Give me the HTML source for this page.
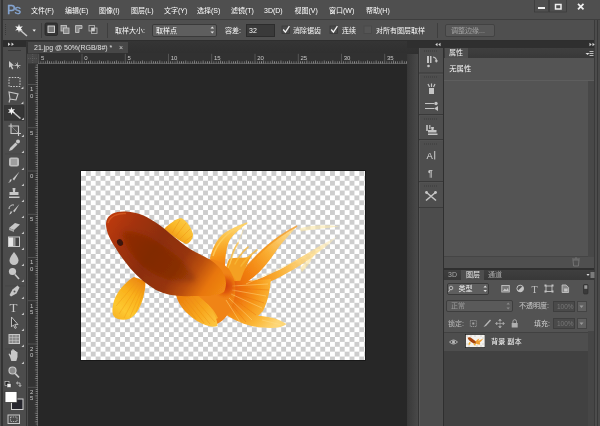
<!DOCTYPE html>
<html lang="zh-CN">
<head>
<meta charset="utf-8">
<title>Photoshop</title>
<style>
*{box-sizing:border-box;margin:0;padding:0}
html,body{width:600px;height:426px;overflow:hidden;background:#4d4d4d}
body{position:relative;font-family:"Liberation Sans","Noto Sans CJK SC",sans-serif;font-size:7px;color:#ececec;line-height:10px}
#wrap{position:absolute;left:0;top:0;width:600px;height:426px;overflow:hidden;filter:blur(0.55px)}
.a{position:absolute}
.t{position:absolute;white-space:nowrap;height:10px}
#menubar{left:0;top:0;width:600px;height:20px;background:#4f4f4f}
#optbar{left:0;top:19px;width:600px;height:22px;background:#4f4f4f;border-top:1px solid #3e3e3e;border-bottom:1px solid #2e2e2e}
#tools{left:0;top:41px;width:27.5px;height:385px;background:#4c4c4c}
#toolhead{left:3px;top:40.8px;width:23.7px;height:6.7px;background:#2d2d2d}
#tabbar{left:27px;top:40.5px;width:391.5px;height:13px;background:linear-gradient(#353535,#2f2f2f)}
#tab{left:27.5px;top:41.5px;width:100px;height:12px;background:#474747}
#rulerh{left:27.5px;top:53.3px;width:379.7px;height:10.3px;background:#313131}
#rulerv{left:27.5px;top:63px;width:10.5px;height:363px;background:#333}
#canvas{left:38px;top:63.6px;width:369.2px;height:363px;background:#272727}
#doc{left:80.6px;top:170.7px;width:284.5px;height:189.4px;background:conic-gradient(#cdcdcd 25%,#fff 0 50%,#cdcdcd 0 75%,#fff 0) 0 0/9.78px 9.78px;box-shadow:0 0 0 0.8px #151515}
#dock{left:407px;top:41px;width:193px;height:385px;background:linear-gradient(90deg,#383838 0,#484848 10.5px,#333 10.6px,#333 12px,#444 12.1px)}
#dockhead{left:407px;top:40.5px;width:193px;height:7px;background:#2f2f2f}
#iconcol{left:419px;top:47.5px;width:23.6px;height:378.5px;background:#4e4e4e;border-left:1px solid #585858}
#gap1{left:442.6px;top:47.5px;width:1.5px;height:378.5px;background:#2f2f2f}
#prop{left:444px;top:48px;width:151px;height:220px;background:#545454}
#proptabs{left:444px;top:47.5px;width:151px;height:10.5px;background:linear-gradient(#3f3f3f,#383838)}
#proptab{left:444.5px;top:47.5px;width:23.5px;height:10.5px;background:#4e4e4e}
#propfoot{left:444px;top:256px;width:151px;height:12px;background:#4f4f4f;border-top:1px solid #454545}
#gap2{left:444px;top:268px;width:151px;height:2px;background:#2f2f2f}
#lay{left:444px;top:270px;width:151px;height:156px;background:#535353}
#laytabs{left:444px;top:270px;width:151px;height:10px;background:linear-gradient(#3f3f3f,#383838)}
#laytab{left:461px;top:270px;width:23px;height:10px;background:#4e4e4e}
#laylist{left:444px;top:331.5px;width:151px;height:95px;background:#414141}
#layrow{left:444px;top:332.5px;width:143.5px;height:18.5px;background:#4e4e4e}
#scr1{left:587.5px;top:81px;width:7px;height:176px;background:#484848}
#scr2{left:587.8px;top:331px;width:6.5px;height:95px;background:#464646}
#propline{left:444px;top:80px;width:151px;height:1px;background:#5e5e5e}

.m{top:6px;font-size:7px;color:#fff}
.o{top:25.5px;color:#fafafa}
#tedge{left:25.7px;top:41px;width:1.8px;height:385px;background:#343434}
#ledge{left:0;top:0;width:3px;height:426px;background:linear-gradient(90deg,#4c4c4c 0,#4c4c4c 1.3px,#333 1.4px)}
#redge{left:594.3px;top:19.5px;width:5.7px;height:406.5px;background:linear-gradient(90deg,#3a3a3a 0,#3a3a3a 1.2px,#4c4c4c 1.3px,#4c4c4c 2.8px,#383838 2.9px,#383838 3.9px,#4a4a4a 4px)}
</style>
</head>
<body>
<div id="wrap">
<div class="a" id="menubar"></div>
<div class="a" id="optbar"></div>
<div class="a" id="tools"></div>
<div class="a" id="toolhead"></div>
<div class="a" id="dock"></div>
<div class="a" id="tabbar"></div>
<div class="a" id="tab"></div>
<div class="a" id="rulerh"></div>
<div class="a" id="rulerv"></div>
<div class="a" id="canvas"></div>
<div class="a" id="doc"></div>
<div class="a" id="dockhead"></div>
<div class="a" id="iconcol"></div>
<div class="a" id="gap1"></div>
<div class="a" id="prop"></div>
<div class="a" id="proptabs"></div>
<div class="a" id="proptab"></div>
<div class="a" id="propfoot"></div>
<div class="a" id="gap2"></div>
<div class="a" id="lay"></div>
<div class="a" id="laytabs"></div>
<div class="a" id="laytab"></div>
<div class="a" id="laylist"></div>
<div class="a" id="layrow"></div>
<div class="a" id="scr1"></div>
<div class="a" id="scr2"></div>
<div class="a" id="propline"></div>
<div class="a" id="redge"></div>
<div class="a" id="ledge"></div>
<div class="a" id="tedge"></div>
<svg class="a" style="left:27px;top:53px" width="383" height="373" viewBox="27 53 383 373">
<rect x="27.500" y="53.500" width="10.300" height="10" fill="#474747"/><path d="M28 58.500 h9.500 M32.700 54 v9" stroke="#6a6a6a" stroke-width=".6" stroke-dasharray="1 1"/>
<defs><pattern id="ph" x="81.650" y="0" width="2.1625" height="4" patternUnits="userSpaceOnUse"><rect width="0.7" height="4" fill="#a0a0a0"/></pattern><pattern id="pv" x="0" y="170.650" width="4" height="2.1625" patternUnits="userSpaceOnUse"><rect width="4" height="0.7" fill="#a0a0a0"/></pattern></defs>
<rect x="38.500" y="61.300" width="368.500" height="2.300" fill="url(#ph)" opacity=".85"/>
<rect x="35.700" y="64" width="2.300" height="362" fill="url(#pv)" opacity=".85"/>
<rect x="38.35" y="53.800" width="0.8" height="9.500" fill="#5e5e5e"/>
<rect x="47.00" y="60.300" width="0.8" height="3" fill="#7c7c7c" opacity=".8"/>
<rect x="55.65" y="60.300" width="0.8" height="3" fill="#7c7c7c" opacity=".8"/>
<rect x="64.30" y="60.300" width="0.8" height="3" fill="#7c7c7c" opacity=".8"/>
<rect x="72.95" y="60.300" width="0.8" height="3" fill="#7c7c7c" opacity=".8"/>
<rect x="81.60" y="53.800" width="0.8" height="9.500" fill="#5e5e5e"/>
<rect x="90.25" y="60.300" width="0.8" height="3" fill="#7c7c7c" opacity=".8"/>
<rect x="98.90" y="60.300" width="0.8" height="3" fill="#7c7c7c" opacity=".8"/>
<rect x="107.55" y="60.300" width="0.8" height="3" fill="#7c7c7c" opacity=".8"/>
<rect x="116.20" y="60.300" width="0.8" height="3" fill="#7c7c7c" opacity=".8"/>
<rect x="124.85" y="53.800" width="0.8" height="9.500" fill="#5e5e5e"/>
<rect x="133.50" y="60.300" width="0.8" height="3" fill="#7c7c7c" opacity=".8"/>
<rect x="142.15" y="60.300" width="0.8" height="3" fill="#7c7c7c" opacity=".8"/>
<rect x="150.80" y="60.300" width="0.8" height="3" fill="#7c7c7c" opacity=".8"/>
<rect x="159.45" y="60.300" width="0.8" height="3" fill="#7c7c7c" opacity=".8"/>
<rect x="168.10" y="53.800" width="0.8" height="9.500" fill="#5e5e5e"/>
<rect x="176.75" y="60.300" width="0.8" height="3" fill="#7c7c7c" opacity=".8"/>
<rect x="185.40" y="60.300" width="0.8" height="3" fill="#7c7c7c" opacity=".8"/>
<rect x="194.05" y="60.300" width="0.8" height="3" fill="#7c7c7c" opacity=".8"/>
<rect x="202.70" y="60.300" width="0.8" height="3" fill="#7c7c7c" opacity=".8"/>
<rect x="211.35" y="53.800" width="0.8" height="9.500" fill="#5e5e5e"/>
<rect x="220.00" y="60.300" width="0.8" height="3" fill="#7c7c7c" opacity=".8"/>
<rect x="228.65" y="60.300" width="0.8" height="3" fill="#7c7c7c" opacity=".8"/>
<rect x="237.30" y="60.300" width="0.8" height="3" fill="#7c7c7c" opacity=".8"/>
<rect x="245.95" y="60.300" width="0.8" height="3" fill="#7c7c7c" opacity=".8"/>
<rect x="254.60" y="53.800" width="0.8" height="9.500" fill="#5e5e5e"/>
<rect x="263.25" y="60.300" width="0.8" height="3" fill="#7c7c7c" opacity=".8"/>
<rect x="271.90" y="60.300" width="0.8" height="3" fill="#7c7c7c" opacity=".8"/>
<rect x="280.55" y="60.300" width="0.8" height="3" fill="#7c7c7c" opacity=".8"/>
<rect x="289.20" y="60.300" width="0.8" height="3" fill="#7c7c7c" opacity=".8"/>
<rect x="297.85" y="53.800" width="0.8" height="9.500" fill="#5e5e5e"/>
<rect x="306.50" y="60.300" width="0.8" height="3" fill="#7c7c7c" opacity=".8"/>
<rect x="315.15" y="60.300" width="0.8" height="3" fill="#7c7c7c" opacity=".8"/>
<rect x="323.80" y="60.300" width="0.8" height="3" fill="#7c7c7c" opacity=".8"/>
<rect x="332.45" y="60.300" width="0.8" height="3" fill="#7c7c7c" opacity=".8"/>
<rect x="341.10" y="53.800" width="0.8" height="9.500" fill="#5e5e5e"/>
<rect x="349.75" y="60.300" width="0.8" height="3" fill="#7c7c7c" opacity=".8"/>
<rect x="358.40" y="60.300" width="0.8" height="3" fill="#7c7c7c" opacity=".8"/>
<rect x="367.05" y="60.300" width="0.8" height="3" fill="#7c7c7c" opacity=".8"/>
<rect x="375.70" y="60.300" width="0.8" height="3" fill="#7c7c7c" opacity=".8"/>
<rect x="384.35" y="53.800" width="0.8" height="9.500" fill="#5e5e5e"/>
<rect x="393.00" y="60.300" width="0.8" height="3" fill="#7c7c7c" opacity=".8"/>
<rect x="401.65" y="60.300" width="0.8" height="3" fill="#7c7c7c" opacity=".8"/>
<text x="41.0" y="59.800" font-family="Liberation Sans,sans-serif" font-size="6" fill="#c8c8c8">5</text>
<text x="84.2" y="59.800" font-family="Liberation Sans,sans-serif" font-size="6" fill="#c8c8c8">0</text>
<text x="127.5" y="59.800" font-family="Liberation Sans,sans-serif" font-size="6" fill="#c8c8c8">5</text>
<text x="170.7" y="59.800" font-family="Liberation Sans,sans-serif" font-size="6" fill="#c8c8c8">10</text>
<text x="213.9" y="59.800" font-family="Liberation Sans,sans-serif" font-size="6" fill="#c8c8c8">15</text>
<text x="257.2" y="59.800" font-family="Liberation Sans,sans-serif" font-size="6" fill="#c8c8c8">20</text>
<text x="300.4" y="59.800" font-family="Liberation Sans,sans-serif" font-size="6" fill="#c8c8c8">25</text>
<text x="343.7" y="59.800" font-family="Liberation Sans,sans-serif" font-size="6" fill="#c8c8c8">30</text>
<text x="386.9" y="59.800" font-family="Liberation Sans,sans-serif" font-size="6" fill="#c8c8c8">35</text>
<rect x="34.800" y="66.80" width="3" height="0.8" fill="#7c7c7c" opacity=".8"/>
<rect x="34.800" y="75.45" width="3" height="0.8" fill="#7c7c7c" opacity=".8"/>
<rect x="28" y="84.10" width="9.800" height="0.8" fill="#5a5a5a"/>
<rect x="34.800" y="92.75" width="3" height="0.8" fill="#7c7c7c" opacity=".8"/>
<rect x="34.800" y="101.40" width="3" height="0.8" fill="#7c7c7c" opacity=".8"/>
<rect x="34.800" y="110.05" width="3" height="0.8" fill="#7c7c7c" opacity=".8"/>
<rect x="34.800" y="118.70" width="3" height="0.8" fill="#7c7c7c" opacity=".8"/>
<rect x="28" y="127.35" width="9.800" height="0.8" fill="#5a5a5a"/>
<rect x="34.800" y="136.00" width="3" height="0.8" fill="#7c7c7c" opacity=".8"/>
<rect x="34.800" y="144.65" width="3" height="0.8" fill="#7c7c7c" opacity=".8"/>
<rect x="34.800" y="153.30" width="3" height="0.8" fill="#7c7c7c" opacity=".8"/>
<rect x="34.800" y="161.95" width="3" height="0.8" fill="#7c7c7c" opacity=".8"/>
<rect x="28" y="170.60" width="9.800" height="0.8" fill="#5a5a5a"/>
<rect x="34.800" y="179.25" width="3" height="0.8" fill="#7c7c7c" opacity=".8"/>
<rect x="34.800" y="187.90" width="3" height="0.8" fill="#7c7c7c" opacity=".8"/>
<rect x="34.800" y="196.55" width="3" height="0.8" fill="#7c7c7c" opacity=".8"/>
<rect x="34.800" y="205.20" width="3" height="0.8" fill="#7c7c7c" opacity=".8"/>
<rect x="28" y="213.85" width="9.800" height="0.8" fill="#5a5a5a"/>
<rect x="34.800" y="222.50" width="3" height="0.8" fill="#7c7c7c" opacity=".8"/>
<rect x="34.800" y="231.15" width="3" height="0.8" fill="#7c7c7c" opacity=".8"/>
<rect x="34.800" y="239.80" width="3" height="0.8" fill="#7c7c7c" opacity=".8"/>
<rect x="34.800" y="248.45" width="3" height="0.8" fill="#7c7c7c" opacity=".8"/>
<rect x="28" y="257.10" width="9.800" height="0.8" fill="#5a5a5a"/>
<rect x="34.800" y="265.75" width="3" height="0.8" fill="#7c7c7c" opacity=".8"/>
<rect x="34.800" y="274.40" width="3" height="0.8" fill="#7c7c7c" opacity=".8"/>
<rect x="34.800" y="283.05" width="3" height="0.8" fill="#7c7c7c" opacity=".8"/>
<rect x="34.800" y="291.70" width="3" height="0.8" fill="#7c7c7c" opacity=".8"/>
<rect x="28" y="300.35" width="9.800" height="0.8" fill="#5a5a5a"/>
<rect x="34.800" y="309.00" width="3" height="0.8" fill="#7c7c7c" opacity=".8"/>
<rect x="34.800" y="317.65" width="3" height="0.8" fill="#7c7c7c" opacity=".8"/>
<rect x="34.800" y="326.30" width="3" height="0.8" fill="#7c7c7c" opacity=".8"/>
<rect x="34.800" y="334.95" width="3" height="0.8" fill="#7c7c7c" opacity=".8"/>
<rect x="28" y="343.60" width="9.800" height="0.8" fill="#5a5a5a"/>
<rect x="34.800" y="352.25" width="3" height="0.8" fill="#7c7c7c" opacity=".8"/>
<rect x="34.800" y="360.90" width="3" height="0.8" fill="#7c7c7c" opacity=".8"/>
<rect x="34.800" y="369.55" width="3" height="0.8" fill="#7c7c7c" opacity=".8"/>
<rect x="34.800" y="378.20" width="3" height="0.8" fill="#7c7c7c" opacity=".8"/>
<rect x="28" y="386.85" width="9.800" height="0.8" fill="#5a5a5a"/>
<rect x="34.800" y="395.50" width="3" height="0.8" fill="#7c7c7c" opacity=".8"/>
<rect x="34.800" y="404.15" width="3" height="0.8" fill="#7c7c7c" opacity=".8"/>
<rect x="34.800" y="412.80" width="3" height="0.8" fill="#7c7c7c" opacity=".8"/>
<rect x="34.800" y="421.45" width="3" height="0.8" fill="#7c7c7c" opacity=".8"/>
<text x="30" y="91.3" font-family="Liberation Sans,sans-serif" font-size="6" fill="#c8c8c8">1</text>
<text x="30" y="97.5" font-family="Liberation Sans,sans-serif" font-size="6" fill="#c8c8c8">0</text>
<text x="30" y="134.6" font-family="Liberation Sans,sans-serif" font-size="6" fill="#c8c8c8">5</text>
<text x="30" y="177.8" font-family="Liberation Sans,sans-serif" font-size="6" fill="#c8c8c8">0</text>
<text x="30" y="221.1" font-family="Liberation Sans,sans-serif" font-size="6" fill="#c8c8c8">5</text>
<text x="30" y="264.3" font-family="Liberation Sans,sans-serif" font-size="6" fill="#c8c8c8">1</text>
<text x="30" y="270.5" font-family="Liberation Sans,sans-serif" font-size="6" fill="#c8c8c8">0</text>
<text x="30" y="307.6" font-family="Liberation Sans,sans-serif" font-size="6" fill="#c8c8c8">1</text>
<text x="30" y="313.8" font-family="Liberation Sans,sans-serif" font-size="6" fill="#c8c8c8">5</text>
<text x="30" y="350.8" font-family="Liberation Sans,sans-serif" font-size="6" fill="#c8c8c8">2</text>
<text x="30" y="357.0" font-family="Liberation Sans,sans-serif" font-size="6" fill="#c8c8c8">0</text>
<text x="30" y="394.1" font-family="Liberation Sans,sans-serif" font-size="6" fill="#c8c8c8">2</text>
<text x="30" y="400.2" font-family="Liberation Sans,sans-serif" font-size="6" fill="#c8c8c8">5</text>
<rect x="37.300" y="64" width="0.7" height="362" fill="#7a7a7a" opacity=".8"/><rect x="38" y="63" width="369" height="0.7" fill="#7a7a7a" opacity=".8"/>
</svg>
<div class="t" style="left:7px;top:0.5px;font-size:13px;line-height:18px;height:18px;color:#86a6d2;letter-spacing:-1.2px;-webkit-text-stroke:0.35px #86a6d2">Ps</div>
<div class="t m" style="left:31px">文件(F)</div>
<div class="t m" style="left:65px">编辑(E)</div>
<div class="t m" style="left:99px">图像(I)</div>
<div class="t m" style="left:131px">图层(L)</div>
<div class="t m" style="left:164px">文字(Y)</div>
<div class="t m" style="left:197px">选择(S)</div>
<div class="t m" style="left:231px">滤镜(T)</div>
<div class="t m" style="left:264px">3D(D)</div>
<div class="t m" style="left:294.5px">视图(V)</div>
<div class="t m" style="left:329px">窗口(W)</div>
<div class="t m" style="left:366px">帮助(H)</div>
<div class="t o" style="left:115px">取样大小:</div>
<div class="a" style="left:152px;top:24px;width:65px;height:13px;background:#5e5e5e;border:1px solid #3a3a3a;border-radius:2px"></div>
<div class="t o" style="left:156px">取样点</div>
<div class="t o" style="left:225px">容差:</div>
<div class="a" style="left:246px;top:24px;width:29px;height:13px;background:#3a3a3a;border:1px solid #2c2c2c"></div>
<div class="t o" style="left:249px">32</div>
<div class="t o" style="left:293px">消除锯齿</div>
<div class="t o" style="left:342px">连续</div>
<div class="t o" style="left:376px">对所有图层取样</div>
<div class="a" style="left:445px;top:24px;width:50px;height:13px;background:#575757;border:1px solid #424242;border-radius:2px"></div>
<div class="t o" style="left:451px;color:#a4a4a4">调整边缘...</div>
<div class="t" style="left:34px;top:43px;color:#e0e0e0">21.jpg @ 50%(RGB/8#) *</div>
<div class="t" style="left:119px;top:43px;color:#cfcfcf">×</div>
<div class="t" style="left:449px;top:48.3px;font-size:7px;color:#f0f0f0">属性</div>
<div class="t" style="left:449.3px;top:64px;font-size:7.3px;color:#f8f8f8">无属性</div>
<div class="t" style="left:448px;top:270px;font-size:7px;color:#a8a8a8">3D</div>
<div class="t" style="left:466px;top:270px;font-size:7px;color:#eaeaea">图层</div>
<div class="t" style="left:488px;top:270px;font-size:7px;color:#a8a8a8">通道</div>
<div class="a" style="left:447px;top:283px;width:42px;height:11.5px;background:#5e5e5e;border:1px solid #3a3a3a;border-radius:2px"></div>
<div class="t" style="left:458.5px;top:284px;color:#f0f0f0">类型</div>
<div class="a" style="left:446px;top:300px;width:67px;height:12px;background:#5a5a5a;border:1px solid #3e3e3e;border-radius:2px"></div>
<div class="t" style="left:451px;top:301px;color:#9a9a9a">正常</div>
<div class="t" style="left:519px;top:301px;color:#c8c8c8">不透明度:</div>
<div class="a" style="left:553px;top:301px;width:22px;height:11px;background:#4a4a4a;border:1px solid #3e3e3e"></div>
<div class="t" style="left:557px;top:301.5px;color:#777;font-size:6.5px">100%</div>
<div class="a" style="left:577px;top:301px;width:9.5px;height:11px;background:#606060;border:1px solid #444"></div>
<div class="t" style="left:448px;top:318.5px;color:#bdbdbd">锁定:</div>
<div class="t" style="left:534px;top:318.5px;color:#d0d0d0">填充:</div>
<div class="a" style="left:553px;top:318px;width:22px;height:11px;background:#4a4a4a;border:1px solid #3e3e3e"></div>
<div class="t" style="left:557px;top:318.5px;color:#777;font-size:6.5px">100%</div>
<div class="a" style="left:577px;top:318px;width:9.5px;height:11px;background:#606060;border:1px solid #444"></div>
<div class="t" style="left:491px;top:337.3px;color:#fafafa;font-size:7.2px">背景 副本</div>

<svg class="a" style="left:0;top:0" width="28" height="426" viewBox="0 0 28 426"><rect x="4.500" y="105.700" width="19.500" height="14.500" fill="#363636" stroke="#2c2c2c" stroke-width="0.6"/><rect x="8" y="50" width="13" height="1" fill="#3a3a3a"/><rect x="5" y="153.5" width="20" height="0.8" fill="#444"/><rect x="5" y="285.5" width="20" height="0.8" fill="#444"/><rect x="5" y="348.5" width="20" height="0.8" fill="#444"/><path d="M9 61 l5 4.5 l-2.2 0.3 l1.5 3 l-1.2 0.6 l-1.5 -3 l-1.6 1.4 z" fill="#c8c8c8"/><path d="M14.5 65.5 h6 M17.5 62.5 v6 M15.5 63.5 l4 4" stroke="#c8c8c8" stroke-width="1" fill="none" opacity=".8"/><rect x="9" y="77.5" width="11" height="9" fill="none" stroke="#c8c8c8" stroke-width="1" stroke-dasharray="1.6 1.2"/><path d="M21 89 l2.4 0 l0 -2.4 z" fill="#cfcfcf"/><path d="M9 92 l9 2 l-2 6 l-6 -1 z M10 99 l-1 3.5" fill="none" stroke="#c8c8c8" stroke-width="1.1"/><path d="M21 104 l2.4 0 l0 -2.4 z" fill="#cfcfcf"/><path d="M13 112 l7.5 6.5" stroke="#c8c8c8" stroke-width="1.6"/><path d="M11.5 107 l.8 2.6 l2.7 -.6 l-1.8 2 l1.8 2 l-2.7 -.5 l-.8 2.6 l-.9 -2.6 l-2.6 .5 l1.8 -2 l-1.8 -2 l2.6 .6 z" fill="#f4f4f4"/><path d="M21.5 120 l2.4 0 l0 -2.4 z" fill="#cfcfcf"/><path d="M11 123.5 v10 h10 M8.5 126 h10 v10" fill="none" stroke="#c8c8c8" stroke-width="1.1"/><path d="M11 126 l7.5 7.5" stroke="#c8c8c8" stroke-width=".6" opacity=".7"/><path d="M21.5 137 l2.4 0 l0 -2.4 z" fill="#cfcfcf"/><path d="M9 151 l1 -3 l5.5 -5.5 l2 2 l-5.5 5.5 z" fill="#c8c8c8"/><circle cx="18" cy="141.5" r="2" fill="#c8c8c8"/><path d="M21.5 153 l2.4 0 l0 -2.4 z" fill="#cfcfcf"/><rect x="9" y="157.5" width="10" height="9" rx="2" fill="#bdbdbd"/><path d="M11 160 h6 M11 162 h6 M11 164 h6" stroke="#666" stroke-width=".7"/><path d="M21.5 170 l2.4 0 l0 -2.4 z" fill="#cfcfcf"/><path d="M19.5 171.5 l-7 7.5 l1.6 1.4 z" fill="#c8c8c8"/><path d="M12 179.5 q-1 3 -4 3.5 q2 -1.5 2 -3.5 z" fill="#c8c8c8"/><path d="M21.5 186 l2.4 0 l0 -2.4 z" fill="#cfcfcf"/><path d="M12.5 188 h3 l-.5 4 h3.500 v3 h-9 v-3 h3.5 z M9 196.500 h10.500 v1.500 h-10.500 z" fill="#c8c8c8"/><path d="M21.5 202 l2.4 0 l0 -2.4 z" fill="#cfcfcf"/><path d="M19.5 204 l-6.500 7 l1.5 1.3 z" fill="#c8c8c8"/><path d="M12.500 211.500 q-1 2.500 -3.500 3 q1.500 -1.500 1.500 -3 z" fill="#c8c8c8"/><path d="M9 209 a4 4 0 0 1 5 -4" fill="none" stroke="#c8c8c8" stroke-width="1"/><path d="M21.5 218 l2.4 0 l0 -2.4 z" fill="#cfcfcf"/><path d="M9 228 l6 -5 l5 1.500 l-6 5.500 z" fill="#c8c8c8"/><path d="M9 228 l5 2 v2 l-5 -2 z" fill="#a8a8a8"/><path d="M21.5 234 l2.4 0 l0 -2.4 z" fill="#cfcfcf"/><rect x="8.5" y="237" width="11" height="9.500" fill="#444" stroke="#c8c8c8" stroke-width="1"/><rect x="9" y="237.500" width="4" height="8.500" fill="#e6e6e6"/><rect x="13" y="237.500" width="2.500" height="8.500" fill="#999"/><path d="M21.5 250 l2.4 0 l0 -2.4 z" fill="#cfcfcf"/><path d="M14 252 q4.500 5.500 4.500 8.500 a4.500 4.500 0 0 1 -9 0 q0 -3 4.500 -8.500 z" fill="#c4c4c4"/><path d="M21.5 266 l2.4 0 l0 -2.4 z" fill="#cfcfcf"/><circle cx="12.500" cy="271.500" r="3.600" fill="#c8c8c8"/><path d="M15 274.500 l4 4.500" stroke="#c8c8c8" stroke-width="1.600"/><path d="M21.5 282 l2.4 0 l0 -2.4 z" fill="#cfcfcf"/><path d="M17.500 285.500 l2 2 l-3 6 l-5.500 3 l-1.500 -1.500 l3 -5.500 z" fill="#c8c8c8"/><circle cx="14.5" cy="291.500" r="1" fill="#555"/><path d="M21.5 299 l2.4 0 l0 -2.4 z" fill="#cfcfcf"/><text x="9.500" y="312" font-family="Liberation Serif,serif" font-size="13" fill="#c8c8c8">T</text><path d="M21.5 315 l2.4 0 l0 -2.4 z" fill="#cfcfcf"/><path d="M11.500 317 l6.500 7.500 l-3.200 -.2 l1.500 3.500 l-1.300 .6 l-1.500 -3.500 l-2 2 z" fill="#3a3a3a" stroke="#c8c8c8" stroke-width=".9"/><path d="M21.5 331 l2.4 0 l0 -2.4 z" fill="#cfcfcf"/><rect x="9" y="334.500" width="10.500" height="9" fill="#8a8a8a" stroke="#c8c8c8" stroke-width="1"/><path d="M9 337.500 h10 M9 340.500 h10 M12.500 334.500 v9 M16 334.500 v9" stroke="#c8c8c8" stroke-width=".5"/><path d="M21.5 347 l2.4 0 l0 -2.4 z" fill="#cfcfcf"/><path d="M10 357 l-1.500 -3 l1 -.6 l1.500 1.600 v-4.500 h1.300 v-1.200 h1.400 v1 h1.300 v.8 h1.300 v1 h1.200 v5 l-1.200 4 h-5 z" fill="#c8c8c8"/><path d="M21.5 364 l2.4 0 l0 -2.4 z" fill="#cfcfcf"/><circle cx="12.500" cy="370.500" r="3.500" fill="#8a8a8a" stroke="#c8c8c8" stroke-width="1.200"/><path d="M15.200 373.500 l3.800 4" stroke="#c8c8c8" stroke-width="1.800"/><rect x="5" y="381.500" width="4" height="4" fill="#222" stroke="#ddd" stroke-width=".6"/><rect x="7" y="383.500" width="4" height="4" fill="#eee" stroke="#333" stroke-width=".5"/><path d="M16.500 383 h3.500 v3.500 M16.500 383 l1.500 -1.300 M16.500 383 l1.500 1.300 M20 386.500 l-1.300 -1.500 M20 386.500 l1.300 -1.500" fill="none" stroke="#c8c8c8" stroke-width=".8"/><rect x="11.500" y="399" width="11.500" height="10.500" fill="#26262e" stroke="#d0d0d0" stroke-width="1"/><rect x="5" y="391.500" width="12" height="11" fill="#ffffff" stroke="#3a3a3a" stroke-width=".8"/><rect x="8" y="415" width="11.500" height="8.500" fill="none" stroke="#c8c8c8" stroke-width="1"/><rect x="10.500" y="417" width="6.500" height="4.500" fill="none" stroke="#c8c8c8" stroke-width=".8" stroke-dasharray="1.3 1"/><path d="M8 42.500 l2.400 1.800 l-2.400 1.800 z M11.500 42.500 l2.400 1.800 l-2.400 1.800 z" fill="#d8d8d8"/></svg>
<svg class="a" style="left:0;top:0" width="600" height="426" viewBox="0 0 600 426"><path d="M5.500 24 v12" stroke="#3a3a3a" stroke-width="1" stroke-dasharray="1 1"/><path d="M20 30 l7 6" stroke="#c8c8c8" stroke-width="1.600"/><path d="M19 24 l.9 2.800 l2.900 -.6 l-2 2.200 l2 2.200 l-2.900 -.6 l-.9 2.800 l-.9 -2.800 l-2.900 .6 l2 -2.200 l-2 -2.200 l2.900 .6 z" fill="#f4f4f4"/><path d="M32.500 29.500 h3.400 l-1.700 2.200 z" fill="#eee"/><rect x="41" y="23" width="1" height="15" fill="#3e3e3e"/><g transform="translate(-0.500 -1)"><rect x="45.500" y="24" width="12.500" height="12.500" rx="1.500" fill="#343434" stroke="#2a2a2a" stroke-width=".8"/><rect x="48.500" y="27" width="6.500" height="6.500" fill="#777" stroke="#ddd" stroke-width=".9"/><rect x="61.500" y="26.500" width="5.500" height="5.500" fill="#888" stroke="#ccc" stroke-width=".8"/><rect x="64" y="29" width="5.500" height="5.500" fill="#888" stroke="#ccc" stroke-width=".8"/><path d="M76 26.500 h6.500 v3 h-3 v4 h-3.500 z" fill="#888" stroke="#ccc" stroke-width=".8"/><rect x="89.500" y="26.500" width="5.500" height="5.500" fill="none" stroke="#bbb" stroke-width=".8"/><rect x="92" y="29" width="5.500" height="5.500" fill="none" stroke="#bbb" stroke-width=".8"/><rect x="92" y="29" width="3" height="3" fill="#ccc"/></g><rect x="107" y="23" width="1" height="15" fill="#3e3e3e"/><path d="M210.500 28.500 l1.800 -2 l1.800 2 z M210.500 31.500 l1.800 2 l1.800 -2 z" fill="#e0e0e0"/><rect x="282" y="26" width="7.500" height="7.500" fill="#4a4a4a" stroke="#3a3a3a" stroke-width=".8"/><path d="M283.2 29.5 l2.200 2.600 l4 -6" fill="none" stroke="#f2f2f2" stroke-width="1.300"/><rect x="330" y="26" width="7.500" height="7.500" fill="#4a4a4a" stroke="#3a3a3a" stroke-width=".8"/><path d="M331.2 29.5 l2.200 2.600 l4 -6" fill="none" stroke="#f2f2f2" stroke-width="1.300"/><rect x="364" y="26" width="7.500" height="7.500" fill="#555" stroke="#484848" stroke-width=".8"/><rect x="437" y="23" width="1" height="15" fill="#3e3e3e"/><rect x="534.500" y="-1" width="14" height="13" fill="none" stroke="#3c3c3c" stroke-width=".8"/><rect x="549.500" y="-1" width="17" height="13" fill="none" stroke="#3c3c3c" stroke-width=".8"/><rect x="538" y="7" width="7" height="2" fill="#f0f0f0"/><rect x="555.500" y="4.500" width="5.500" height="4.500" fill="none" stroke="#f0f0f0" stroke-width="1.500"/><path d="M578 3.800 l5.500 5.500 M583.500 3.800 l-5.500 5.500" stroke="#f0f0f0" stroke-width="1.700"/><path d="M437.500 42.800 l-2.200 1.700 l2.200 1.700 z M440.500 42.800 l-2.200 1.700 l2.200 1.700 z" fill="#d8d8d8"/><path d="M589.500 42.800 l2.200 1.700 l-2.200 1.700 z M592.500 42.800 l2.200 1.700 l-2.200 1.700 z" fill="#d8d8d8"/><path d="M586.500 52 l2 2 l-2 2 z" fill="#ddd" transform="rotate(90 587.5 54)"/><path d="M589.500 51.500 h4 M589.500 53.500 h4 M589.500 55.500 h4" stroke="#ddd" stroke-width=".8"/><path d="M586.500 274 h3 l-1.500 2 z" fill="#ddd"/><path d="M590.500 273 h4 M590.500 275 h4 M590.500 277 h4" stroke="#ddd" stroke-width=".8"/><rect x="419" y="72.5" width="24" height="1.2" fill="#393939"/><rect x="419" y="73.7" width="24" height="0.8" fill="#565656"/><rect x="419" y="114" width="24" height="1.2" fill="#393939"/><rect x="419" y="115.2" width="24" height="0.8" fill="#565656"/><rect x="419" y="139" width="24" height="1.2" fill="#393939"/><rect x="419" y="140.2" width="24" height="0.8" fill="#565656"/><rect x="419" y="181" width="24" height="1.2" fill="#393939"/><rect x="419" y="182.2" width="24" height="0.8" fill="#565656"/><path d="M424 51 h14" stroke="#3a3a3a" stroke-width="1" stroke-dasharray="1 1"/><path d="M424 77 h14" stroke="#3a3a3a" stroke-width="1" stroke-dasharray="1 1"/><path d="M424 119 h14" stroke="#3a3a3a" stroke-width="1" stroke-dasharray="1 1"/><path d="M424 144 h14" stroke="#3a3a3a" stroke-width="1" stroke-dasharray="1 1"/><path d="M424 186 h14" stroke="#3a3a3a" stroke-width="1" stroke-dasharray="1 1"/><rect x="419" y="207" width="24" height="1" fill="#3c3c3c"/><rect x="420" y="208" width="22.600" height="218" fill="#4c4c4c"/><path d="M427 56 h2 v7 h-2 z M430 56 h1.500 v7 h-1.500 z" fill="#c4c4c4"/><circle cx="428.500" cy="66" r="1.300" fill="#c4c4c4"/><path d="M433 57 q3.500 .5 3.500 4.500 l1 -1 M436.500 61.500 l-1.500 -.8" fill="none" stroke="#c4c4c4" stroke-width="1.200"/><path d="M429 88 h5 v6 h-5 z" fill="#c4c4c4"/><path d="M429.500 87 l-1.500 -3 M431.500 87 v-3.500 M433.500 87 l1.500 -3" stroke="#c4c4c4" stroke-width="1.200"/><path d="M425 103.500 h9 M425 108.500 h9" stroke="#c4c4c4" stroke-width="1.200"/><circle cx="436" cy="103.500" r="1.700" fill="#c4c4c4"/><path d="M434 108.500 l4 -2.500 v5 z" fill="#c4c4c4"/><path d="M426 125 h2 v6 h-2 z M429 125 h1.500 v4 h-1.500 z" fill="#c4c4c4" opacity=".8"/><path d="M431 127 h3 l-.5 3 h3 v2.500 h-8.500 v-2.500 h3.500 z M428 133.500 h9.500 v1.500 h-9.500 z" fill="#c4c4c4"/><text x="426.500" y="159" font-family="Liberation Sans,sans-serif" font-size="9.500" fill="#dcdcdc">A</text><rect x="434.300" y="151" width="0.9" height="8.500" fill="#dcdcdc"/><text x="428" y="176" font-family="Liberation Sans,sans-serif" font-size="8.500" font-weight="bold" fill="#c4c4c4">¶</text><path d="M426 192 l10 8.500 M436 192 l-10 8.500" stroke="#c4c4c4" stroke-width="1.600"/><circle cx="426.500" cy="192.500" r="1.400" fill="#c4c4c4"/><circle cx="435.500" cy="192.500" r="1.400" fill="#c4c4c4"/><path d="M573 260 h6 l-.6 6 h-4.800 z M572 259 h8 M575 258 h2" fill="none" stroke="#777" stroke-width=".9"/><circle cx="451" cy="288" r="1.800" fill="none" stroke="#c4c4c4" stroke-width=".9"/><path d="M450 289.500 l-1.500 2.500" stroke="#c4c4c4" stroke-width=".9"/><path d="M483.500 287.500 l1.700 -1.900 l1.700 1.900 z M483.500 290 l1.700 1.900 l1.700 -1.900 z" fill="#e0e0e0"/><g transform="translate(-2.700 0)"><rect x="504.500" y="285.500" width="7.500" height="6.500" fill="#777" stroke="#c4c4c4" stroke-width=".9"/><path d="M505.500 291 l2 -2.500 l1.500 1.500 l1.500 -2 l1 3 z" fill="#c4c4c4"/></g><g transform="translate(-1.300 0)"><circle cx="521.500" cy="288.500" r="3.300" fill="none" stroke="#c4c4c4" stroke-width="1"/><path d="M521.500 285.200 a3.300 3.300 0 0 1 0 6.600 z" fill="#c4c4c4" transform="rotate(45 521.5 288.5)"/></g><text x="531.500" y="292.500" font-family="Liberation Serif,serif" font-size="10" fill="#c4c4c4">T</text><rect x="546" y="286" width="6" height="5.500" fill="none" stroke="#c4c4c4" stroke-width=".9"/><path d="M544.500 284.500 h2 v2 h-2 z M551.500 284.500 h2 v2 h-2 z M544.500 290.500 h2 v2 h-2 z M551.500 290.500 h2 v2 h-2 z" fill="#c4c4c4"/><g transform="translate(2.600 0)"><path d="M559.500 285 h4 l2.500 2.500 v5 h-6.500 z" fill="#888" stroke="#c4c4c4" stroke-width=".9"/><rect x="561.500" y="288.500" width="3.500" height="3" fill="#c4c4c4"/></g><rect x="583.500" y="284.500" width="4.500" height="9.500" rx="1" fill="#3a3a3a" stroke="#2c2c2c" stroke-width=".6"/><rect x="584.300" y="285.300" width="3" height="3.500" fill="#9a9a9a"/><path d="M506.500 304.500 l1.700 -1.900 l1.700 1.900 z M506.500 307.500 l1.700 1.900 l1.700 -1.900 z" fill="#8a8a8a"/><path d="M579.500 305.500 h4 l-2 2.500 z" fill="#9a9a9a"/><path d="M579.500 322.500 h4 l-2 2.500 z" fill="#9a9a9a"/><rect x="470.300" y="320.500" width="6" height="6" fill="none" stroke="#a8a8a8" stroke-width=".8" stroke-dasharray="1.200 .8"/><rect x="472.300" y="322.500" width="2" height="2" fill="#a8a8a8"/><path d="M490 319.500 l-5 5.500 l-1.500 2 l2.500 -1 l5 -5.500 z" fill="#b8b8b8"/><g transform="translate(9 3)"><path d="M491 316.500 v8 M487 320.500 h8 M491 316 l-1.300 1.500 h2.600 z M491 325 l-1.300 -1.500 h2.600 z M486.500 320.500 l1.500 -1.300 v2.600 z M495.500 320.500 l-1.500 -1.300 v2.600 z" stroke="#a8a8a8" stroke-width=".7" fill="#a8a8a8"/></g><rect x="511.700" y="323" width="6" height="4.500" fill="#b0b0b0"/><path d="M512.900 323 v-1.500 a1.800 1.800 0 0 1 3.600 0 v1.500" fill="none" stroke="#b0b0b0" stroke-width=".9"/><path d="M449.500 342 q4 -4 8 0 q-4 4 -8 0 z" fill="none" stroke="#bcbcbc" stroke-width=".9"/><circle cx="453.500" cy="342" r="1.500" fill="#bcbcbc"/></svg>
<svg class="a" style="left:464.500px;top:334px" width="20.500" height="14" viewBox="0 0 20.500 14"><rect width="20.500" height="14" fill="#f4f2ee"/><rect x="0.400" y="0.400" width="19.700" height="13.200" fill="none" stroke="#1e1e1e" stroke-width=".8"/><g opacity=".35" fill="#c8c8c8"><rect x="1" y="1" width="2" height="2"/><rect x="5" y="1" width="2" height="2"/><rect x="15" y="1" width="2" height="2"/><rect x="17" y="3" width="2" height="2"/><rect x="1" y="9" width="2" height="2"/><rect x="3" y="11" width="2" height="2"/><rect x="15" y="11" width="2" height="2"/><rect x="17" y="9" width="2" height="2"/><rect x="9" y="1" width="2" height="2"/><rect x="11" y="11" width="2" height="2"/></g><path d="M2.500 3.800 q2.200 -1.300 4.500 .6 l4 3.200 q.8 1.200 .2 2 q-2.600 .3 -5 -1.600 q-3.200 -2.200 -3.700 -4.200 z" fill="#a8460e"/><path d="M10.500 7.600 q2 -2.600 4 -3.200 q-1 1.600 -1.200 2.600 q2.400 -1.400 4.800 -2.200 q-1.400 2.400 -3.400 3.800 q.6 1.200 .4 1.800 q-2.600 .4 -4.400 -1.200 z" fill="#f2a030"/><path d="M4.500 8 l-1.500 2.500 l1.800 .3 l1 -2 z M8 9.500 l1.500 2 l1.500 -.2 l-1 -1.800 z" fill="#f6b030"/></svg>
<svg class="a" style="left:81px;top:171px" width="284" height="188" viewBox="81 171 284 188">
<defs>
<linearGradient id="gb" gradientUnits="userSpaceOnUse" x1="110" y1="218" x2="222" y2="292">
<stop offset="0" stop-color="#bc3a0a"/><stop offset="0.18" stop-color="#a23208"/><stop offset="0.4" stop-color="#8c2e08"/><stop offset="0.62" stop-color="#963408"/><stop offset="0.76" stop-color="#bc500c"/><stop offset="0.88" stop-color="#e8760f"/><stop offset="1" stop-color="#f08812"/>
</linearGradient>
<radialGradient id="gt" gradientUnits="userSpaceOnUse" cx="226" cy="287" r="62">
<stop offset="0" stop-color="#d44208"/><stop offset="0.2" stop-color="#ea680b"/><stop offset="0.5" stop-color="#f69418"/><stop offset="0.75" stop-color="#fbb838"/><stop offset="1" stop-color="#fdd676"/>
</radialGradient>
<radialGradient id="gt2" gradientUnits="userSpaceOnUse" cx="226" cy="287" r="118">
<stop offset="0" stop-color="#e25a0a"/><stop offset="0.25" stop-color="#f38412"/><stop offset="0.45" stop-color="#f9ac30"/><stop offset="0.65" stop-color="#fccc6a" stop-opacity="0.92"/><stop offset="0.85" stop-color="#fde3a0" stop-opacity="0.75"/><stop offset="1" stop-color="#fdeec0" stop-opacity="0.5"/>
</radialGradient>
<linearGradient id="gf" gradientUnits="userSpaceOnUse" x1="142" y1="280" x2="116" y2="316">
<stop offset="0" stop-color="#ec860f"/><stop offset="0.4" stop-color="#fab21c"/><stop offset="0.8" stop-color="#fdc830"/><stop offset="1" stop-color="#f9b828"/>
</linearGradient>
<linearGradient id="gv" gradientUnits="userSpaceOnUse" x1="182" y1="296" x2="214" y2="324">
<stop offset="0" stop-color="#ec820f"/><stop offset="0.6" stop-color="#f8a81e"/><stop offset="1" stop-color="#fcc43c"/>
</linearGradient>
<linearGradient id="gd" gradientUnits="userSpaceOnUse" x1="170" y1="240" x2="188" y2="220">
<stop offset="0" stop-color="#ee9012"/><stop offset="0.5" stop-color="#f9b828"/><stop offset="1" stop-color="#fccc48"/>
</linearGradient>
<radialGradient id="gc" gradientUnits="userSpaceOnUse" cx="225" cy="286" r="13"><stop offset="0" stop-color="#cc3a08"/><stop offset="0.5" stop-color="#d84a0a" stop-opacity="0.75"/><stop offset="1" stop-color="#e8640c" stop-opacity="0"/></radialGradient>
<filter id="bl" x="-10%" y="-10%" width="120%" height="120%"><feGaussianBlur stdDeviation="0.7"/></filter>
<filter id="bl3" x="-20%" y="-20%" width="140%" height="140%"><feGaussianBlur stdDeviation="2.5"/></filter>
</defs>
<g filter="url(#bl)">
<!-- wisp lobe 3 -->
<path d="M299 228.500 C312 225 326 224.500 340 226.500 C326 228 312 229.500 301 231.500 Z" fill="#fbe8a8" opacity="0.6"/>
<path d="M300 268 C306 262 312 256 316 250 C313 259 308 266 302 272 Z" fill="#fbe29a" opacity="0.6"/>
<!-- lobe 4 -->
<path d="M238 287 C250 283 264 277 280 269.500 C292 263 308 252 337 236.500 C328 246 316 254.500 304 263 C290 272 274 281 252 289 Z" fill="url(#gt2)"/>
<!-- lobe 2 -->
<path d="M232 284 C238 276 244 269 250 262.500 C259 252.500 269 242.700 280 235.600 C286 231.500 292 228 298 225.500 C292 232 286 238 280 245.500 C274 254 268 263 259.400 272 C252 279 244 284 236 288 Z" fill="url(#gt2)"/>
<path d="M240 274 C252 260 270 240 297 226" fill="none" stroke="#f08a14" stroke-width="1.800" opacity="0.6"/>
<!-- lobe 1 -->
<path d="M210 258 C212 249 216 241 222 235 C229 229 240 224.500 248.500 222.500 C242 227 236 232 231 238 C227 244 225.500 254 225 264 C225 270 226 276 227 280 L216 276 Z" fill="url(#gt)"/>
<path d="M213 256 C217 243 228 230 247 223" fill="none" stroke="#fcd060" stroke-width="1.500" opacity="0.8"/>
<!-- inner rays region between lobes -->
<path d="M224 286 C224 276 226 266 229 259 C234 257 240 258 246 257.500 C248 257 250 256 252 255 C248 262 243 272 238 288 Z" fill="#f4a020"/>
<g stroke="#f8b838" stroke-width="1.600" opacity="0.8" fill="none" stroke-linecap="round"><path d="M230 264 C231 256 234 249 238 243"/><path d="M235 264 C238 258 242 252 248 247"/><path d="M241 266 C245 260 250 255 257 250"/></g>
<!-- main fan -->
<path d="M222 282 C238 280 256 281 271 279 C270 290 268 301 263 311 L258 316 C266 316 278 318 286.500 324 C282 328 272 328.500 262 327.500 C250 327 238 322 228 316 C218 309 212 298 212 288 Z" fill="url(#gt)"/>
<!-- tail base lower-left -->
<path d="M194 262 C204 256 218 258 228 268 C236 278 238 292 232 306 C228 316 222 323 214 325 C206 320 198 308 194 296 C190 284 190 270 194 262 Z" fill="#f08414"/><path d="M196 298 C204 300 212 306 218 318 C212 322 204 318 198 310 Z" fill="#f8b02a"/>
<g stroke="#ffe08a" stroke-width="0.9" opacity="0.5" fill="none">
<path d="M232 286 L268 284"/><path d="M232 290 L266 296"/><path d="M231 294 L262 308"/><path d="M229 298 L252 320"/><path d="M226 300 L240 322"/>
<path d="M228 268 L244 228"/><path d="M246 284 L320 250"/><path d="M262 320 L282 325"/>
</g>
<g stroke="#e8700c" stroke-width="0.9" opacity="0.45" fill="none">
<path d="M232 288 L269 290"/><path d="M231 292 L264 303"/><path d="M230 296 L256 315"/><path d="M227 299 L246 322"/>
</g>
<circle cx="225" cy="286" r="13" fill="url(#gc)"/>
<!-- right pectoral (top) fin -->
<path d="M164 229 C170 223 176 219 181 218 C187 221 191 227 193 234 C193 239 190 243 186 244 C178 240 170 234 164 229 Z" fill="url(#gd)"/>
<g stroke="#ee8c10" stroke-width="0.8" opacity="0.5" fill="none"><path d="M172 233 L180 220"/><path d="M176 236 L186 223"/><path d="M180 239 L190 229"/><path d="M184 242 L192 236"/></g>
<!-- left pectoral fin -->
<path d="M134 277 C128 280 120 288 116 296 C113 302 111.500 310 113 315 C116 320 124 321 130 318.500 C136 315 140 308 142.500 300 C144.500 293 146 286 145 281 Z" fill="url(#gf)"/>
<g stroke="#f09414" stroke-width="0.8" opacity="0.5" fill="none"><path d="M138 280 L116 306"/><path d="M140 282 L119 314"/><path d="M141 285 L124 318"/><path d="M143 287 L130 317"/><path d="M144 290 L136 312"/></g>
<!-- ventral fin -->
<path d="M176 295 C178 304 185 313 197 321 C204 325 212 328 217.500 326 C217.500 319 213 311 207 304 C202 298 197 295 193 293 Z" fill="url(#gv)"/>
<g stroke="#ee880e" stroke-width="0.8" opacity="0.5" fill="none"><path d="M184 298 L204 323"/><path d="M188 297 L210 324"/><path d="M192 296 L215 322"/><path d="M181 300 L196 319"/></g>
<!-- body -->
<path d="M106.500 221 C108 214 116 211 126 211.500 C138 212 148 217 158 224 C168 231 178 241 190 249 C200 255 210 258 218 266 C226 274 228 284 224 292 C216 297 204 296 192 296 C178 297 166 295 156 290 C146 284 138 277 130 268 C122 258 112 244 108 234 C106 228 105.500 224 106.500 221 Z" fill="url(#gb)"/>
<path d="M122 232 C136 230 152 238 168 250 C182 260 192 270 196 280 C184 284 166 280 152 272 C136 262 126 248 122 232 Z" fill="#6e2204" opacity="0.35" filter="url(#bl3)"/>
<path d="M108 223 C110 216 118 213 126 213.500" fill="none" stroke="#d8602a" stroke-width="1.400" opacity="0.7"/>
<ellipse cx="120" cy="242.500" rx="2.800" ry="3.600" fill="#3a1408" transform="rotate(-30 120 242.500)"/>
</g>
</svg>

</div>
</body>
</html>
